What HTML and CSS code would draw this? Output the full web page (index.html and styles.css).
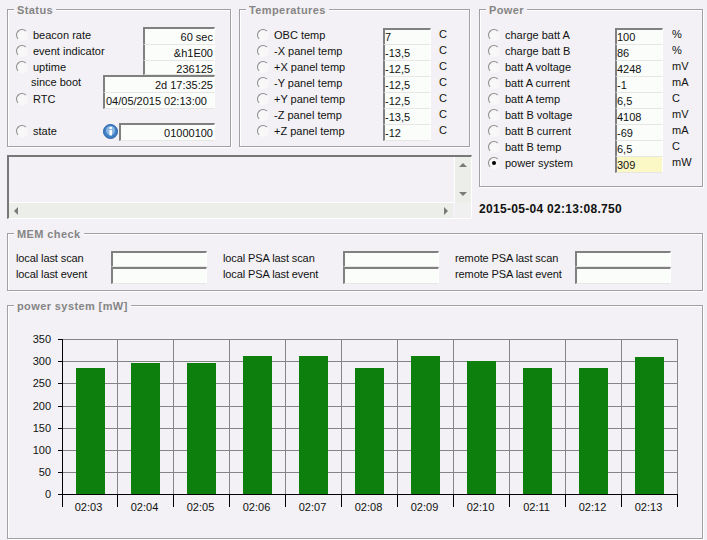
FILE: index.html
```html
<!DOCTYPE html>
<html lang="en">
<head>
<meta charset="utf-8">
<title>Telemetry</title>
<link rel="stylesheet" href="styles.css">
</head>
<body>
<main class="page">
  <div class="top">
    <div class="left-col">
      <div class="left-row">
        <section class="group status">
          <h2 class="legend">Status</h2>
          <div class="row"><span class="radio"></span><span class="label">beacon rate</span><span class="field w72 right first">60 sec</span></div>
          <div class="row"><span class="radio"></span><span class="label">event indicator</span><span class="field w72 right">&amp;h1E00</span></div>
          <div class="row"><span class="radio"></span><span class="label">uptime</span><span class="field w72 right short">236125</span></div>
          <div class="row"><span class="label sub">since boot</span><span class="field w112 right first">2d 17:35:25</span></div>
          <div class="row"><span class="radio"></span><span class="label">RTC</span><span class="field w112 inset">04/05/2015 02:13:00</span></div>
          <div class="row"></div>
          <div class="row"><span class="radio"></span><span class="label">state</span>
            <svg class="info" viewBox="0 0 15 15" aria-hidden="true"><circle cx="7.5" cy="7.5" r="7" fill="#3f7fc4" stroke="#2a62a8"/><circle cx="7.5" cy="6.5" r="4.5" fill="#8db8e4"/><rect x="6.5" y="6" width="2.4" height="5.5" fill="#fff"/><rect x="6.5" y="3" width="2.4" height="2" fill="#fff"/></svg>
            <span class="field w96 right first">01000100</span></div>
        </section>
        <section class="group temps">
          <h2 class="legend">Temperatures</h2>
          <div class="row"><span class="radio"></span><span class="label">OBC temp</span><span class="field w48 lead">7</span><span class="unit">C</span></div>
          <div class="row"><span class="radio"></span><span class="label">-X panel temp</span><span class="field w48">-13,5</span><span class="unit">C</span></div>
          <div class="row"><span class="radio"></span><span class="label">+X panel temp</span><span class="field w48">-12,5</span><span class="unit">C</span></div>
          <div class="row"><span class="radio"></span><span class="label">-Y panel temp</span><span class="field w48">-12,5</span><span class="unit">C</span></div>
          <div class="row"><span class="radio"></span><span class="label">+Y panel temp</span><span class="field w48">-12,5</span><span class="unit">C</span></div>
          <div class="row"><span class="radio"></span><span class="label">-Z panel temp</span><span class="field w48">-13,5</span><span class="unit">C</span></div>
          <div class="row"><span class="radio"></span><span class="label">+Z panel temp</span><span class="field w48">-12</span><span class="unit">C</span></div>
        </section>
      </div>
      <div class="logbox">
        <div class="log-text"></div>
        <div class="vbar"><span class="arrow up"></span><span class="arrow down"></span></div>
        <div class="hbar"><span class="arrow leftward"></span><span class="arrow rightward"></span></div>
        <div class="corner"></div>
      </div>
    </div>
    <div class="right-col">
      <section class="group power">
        <h2 class="legend">Power</h2>
        <div class="row"><span class="radio"></span><span class="label">charge batt A</span><span class="field w48 lead">100</span><span class="unit">%</span></div>
        <div class="row"><span class="radio"></span><span class="label">charge batt B</span><span class="field w48">86</span><span class="unit">%</span></div>
        <div class="row"><span class="radio"></span><span class="label">batt A voltage</span><span class="field w48">4248</span><span class="unit">mV</span></div>
        <div class="row"><span class="radio"></span><span class="label">batt A current</span><span class="field w48">-1</span><span class="unit">mA</span></div>
        <div class="row"><span class="radio"></span><span class="label">batt A temp</span><span class="field w48">6,5</span><span class="unit">C</span></div>
        <div class="row"><span class="radio"></span><span class="label">batt B voltage</span><span class="field w48">4108</span><span class="unit">mV</span></div>
        <div class="row"><span class="radio"></span><span class="label">batt B current</span><span class="field w48">-69</span><span class="unit">mA</span></div>
        <div class="row"><span class="radio"></span><span class="label">batt B temp</span><span class="field w48">6,5</span><span class="unit">C</span></div>
        <div class="row"><span class="radio checked"></span><span class="label">power system</span><span class="field w48 hot">309</span><span class="unit">mW</span></div>
      </section>
      <div class="timestamp">2015-05-04 02:13:08.750</div>
    </div>
  </div>

  <section class="group mem">
    <h2 class="legend">MEM check</h2>
    <div class="mem-grid">
      <span class="mem-label c1">local last scan</span><span class="field w96 first mem-field"></span>
      <span class="mem-label">local PSA last scan</span><span class="field w96 first mem-field"></span>
      <span class="mem-label">remote PSA last scan</span><span class="field w96 first mem-field"></span>
      <span class="mem-label c1">local last event</span><span class="field w96 first mem-field tall"></span>
      <span class="mem-label">local PSA last event</span><span class="field w96 first mem-field tall"></span>
      <span class="mem-label">remote PSA last event</span><span class="field w96 first mem-field tall"></span>
    </div>
  </section>

  <section class="group chart-panel">
    <h2 class="legend">power system [mW]</h2>
    <svg class="chart" viewBox="8 306 694 231" width="694" height="231" role="img" aria-label="power system bar chart">
      <g class="grid">
        <path d="M62 339.5H677.5M62 361.5H677.5M62 383.5H677.5M62 406.5H677.5M62 428.5H677.5M62 450.5H677.5M62 472.5H677.5"/>
        <path d="M117.5 339V494M173.5 339V494M229.5 339V494M285.5 339V494M341.5 339V494M397.5 339V494M453.5 339V494M509.5 339V494M565.5 339V494M621.5 339V494M677.5 339V494"/>
      </g>
      <g class="bars">
        <rect x="76" y="368" width="29" height="126"/>
        <rect x="131" y="363" width="29" height="131"/>
        <rect x="187" y="363" width="29" height="131"/>
        <rect x="243" y="356" width="29" height="138"/>
        <rect x="299" y="356" width="29" height="138"/>
        <rect x="355" y="368" width="29" height="126"/>
        <rect x="411" y="356" width="29" height="138"/>
        <rect x="467" y="361" width="29" height="133"/>
        <rect x="523" y="368" width="29" height="126"/>
        <rect x="579" y="368" width="29" height="126"/>
        <rect x="635" y="357" width="29" height="137"/>
      </g>
      <g class="axis">
        <path d="M62.5 339V507M58 339.5H62M58 361.5H62M58 383.5H62M58 406.5H62M58 428.5H62M58 450.5H62M58 472.5H62M58 494.5H678"/>
        <path d="M117.5 494V507M173.5 494V507M229.5 494V507M285.5 494V507M341.5 494V507M397.5 494V507M453.5 494V507M509.5 494V507M565.5 494V507M621.5 494V507M677.5 494V507"/>
      </g>
      <g class="ylabels">
        <text x="51" y="343">350</text>
        <text x="51" y="365">300</text>
        <text x="51" y="387">250</text>
        <text x="51" y="410">200</text>
        <text x="51" y="432">150</text>
        <text x="51" y="454">100</text>
        <text x="51" y="476">50</text>
        <text x="51" y="498">0</text>
      </g>
      <g class="xlabels">
        <text x="88.5" y="511">02:03</text>
        <text x="144.5" y="511">02:04</text>
        <text x="200.5" y="511">02:05</text>
        <text x="256.5" y="511">02:06</text>
        <text x="312.5" y="511">02:07</text>
        <text x="368.5" y="511">02:08</text>
        <text x="424.5" y="511">02:09</text>
        <text x="480.5" y="511">02:10</text>
        <text x="536.5" y="511">02:11</text>
        <text x="592.5" y="511">02:12</text>
        <text x="648.5" y="511">02:13</text>
      </g>
    </svg>
  </section>
</main>
</body>
</html>
```
FILE: styles.css
```css
* { box-sizing: border-box; }
html, body {
  margin: 0;
  padding: 0;
  background: #f3f1f5;
  overflow: hidden;
}
body {
  font-family: "Liberation Sans", Arial, sans-serif;
  font-size: 11px;
  line-height: 14px;
  color: #111;
}
.page {
  width: 707px;
  height: 540px;
  padding: 9px 4px 0 7px;
  display: flex;
  flex-direction: column;
  gap: 14px;
}
.top { display: flex; gap: 8px; }
.left-col {
  width: 464px;
  display: flex;
  flex-direction: column;
  gap: 8px;
}
.left-row { display: flex; gap: 8px; }
.right-col { width: 224px; }

.group {
  position: relative;
  border: 1px solid #a2a0a4;
  box-shadow: inset 1px 1px 0 #fff, 1px 1px 0 #fff;
}
.legend {
  position: absolute;
  top: -7px;
  left: 6px;
  margin: 0;
  padding: 0 3px;
  background: #f3f1f5;
  font-size: 11px;
  line-height: 14px;
  font-weight: bold;
  letter-spacing: 0.4px;
  color: #858585;
}
.status { width: 224px; height: 138px; padding: 17px 15px 0 8px; }
.temps { width: 231px; height: 138px; padding: 17px 10px 0 17px; }
.power { width: 224px; height: 178px; padding: 17px 10px 0 8px; }

.row {
  display: flex;
  align-items: center;
  height: 16px;
}
.radio {
  flex: none;
  position: relative;
  width: 12px;
  height: 12px;
  margin-right: 5px;
  border-radius: 50%;
  border: 1px solid;
  border-color: #8a8a8a #f8f8f8 #f8f8f8 #8a8a8a;
  background: #f8f8f8;
}
.checked::after {
  content: "";
  position: absolute;
  left: 3px;
  top: 3px;
  width: 4px;
  height: 4px;
  border-radius: 50%;
  background: #000;
}
.label { flex: 1; white-space: nowrap; }
.sub { margin-top: -2px; padding-left: 15px; }
.field {
  flex: none;
  align-self: flex-start;
  display: block;
  height: 16px;
  margin-top: 2px;
  padding-top: 1px;
  background: #fbfdfb;
  border-left: 2px solid #808080;
  border-right: 1px solid #fff;
  border-bottom: 1px solid #e6e6e4;
  white-space: nowrap;
  overflow: hidden;
}
.w48 { width: 48px; }
.w72 { width: 72px; }
.w96 { width: 96px; }
.w112 { width: 112px; }
.right { text-align: right; padding-right: 1px; }
.inset { padding-left: 1px; }
.first {
  height: 18px;
  margin-top: 0;
  border-top: 2px solid #808080;
}
.lead {
  height: 17px;
  margin-top: 1px;
  padding-top: 0;
  border-top: 2px solid #808080;
}
.short { height: 14px; }
.hot { background: #fbf8c6; }
.unit { flex: none; width: 20px; margin-left: 8px; margin-top: -2px; }
.power .unit { margin-left: 9px; }
.power { padding-right: 10px; }
.info { flex: none; width: 15px; height: 15px; margin-right: 1px; }

.logbox {
  display: grid;
  grid-template-columns: 1fr 16px;
  grid-template-rows: 1fr 15px;
  height: 64px;
  border: 1px solid #fff;
  border-top: 2px solid #777;
  border-left: 2px solid #777;
  margin-right: -1px;
}
.log-text { background: #f3f1f5; border-bottom: 1px solid #fff; border-right: 1px solid #fff; }
.vbar, .hbar {
  display: flex;
  justify-content: space-between;
  align-items: center;
  background: #eceeea;
}
.vbar { flex-direction: column; padding: 6px 0 7px; }
.hbar { padding: 0 5px; margin-right: 2px; }
.corner { background: #f0f0f0; }
.arrow { width: 0; height: 0; border: 4px solid transparent; }
.up { border-top: 0; border-bottom-color: #7a7a7a; }
.down { border-bottom: 0; border-top-color: #7a7a7a; }
.leftward { border-left: 0; border-right-color: #7a7a7a; }
.rightward { border-right: 0; border-left-color: #7a7a7a; }

.timestamp {
  margin-top: 15px;
  font-size: 12px;
  line-height: 14px;
  font-weight: bold;
  letter-spacing: 0.3px;
  color: #111;
}

.mem { height: 58px; padding: 17px 0 0 8px; }
.mem-grid {
  display: grid;
  grid-template-columns: 95px 96px 136px 96px 136px 96px;
  grid-template-rows: 16px 16px;
}
.mem-label { padding-left: 16px; white-space: nowrap; letter-spacing: -0.1px; }
.mem-label.c1 { padding-left: 0; }
.mem-field { margin-top: 0; height: 16px; }
.mem-field.tall { height: 17px; }

.chart-panel { height: 234px; padding: 0; }
.chart { display: block; }
.grid path { fill: none; stroke: #858585; stroke-width: 1; }
.axis path { fill: none; stroke: #000; stroke-width: 1; }
.bars rect { fill: #0d7f0d; }
.ylabels text, .xlabels text {
  font-family: "Liberation Sans", Arial, sans-serif;
  font-size: 11px;
  fill: #111;
}
.ylabels text { text-anchor: end; }
.xlabels text { text-anchor: middle; }
```
